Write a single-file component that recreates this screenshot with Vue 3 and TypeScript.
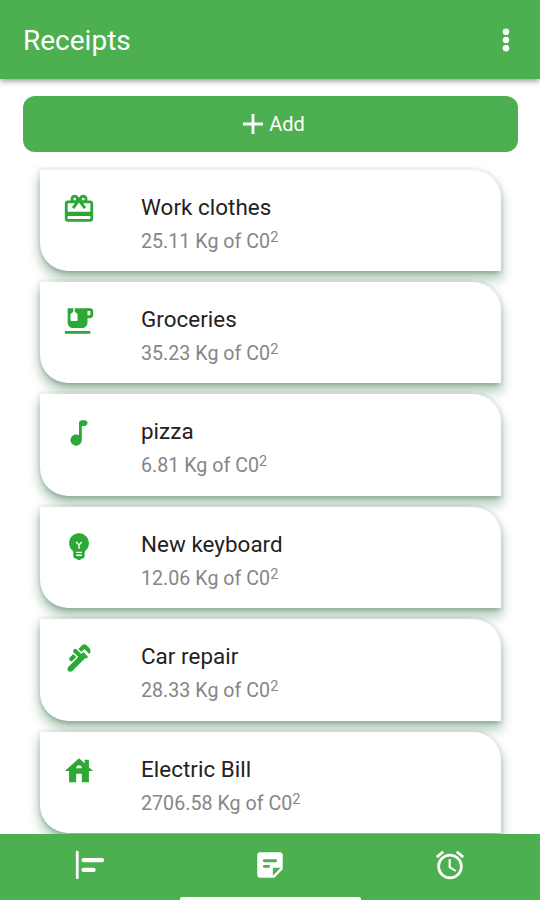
<script setup lang="ts">
interface Receipt {
  title: string
  amount: string
  icon: string
}

const receipts: Receipt[] = [
  {
    title: 'Work clothes',
    amount: '25.11',
    icon: 'M20 6h-2.18c.11-.31.18-.65.18-1 0-1.66-1.34-3-3-3-1.05 0-1.96.54-2.5 1.35l-.5.67-.5-.68C10.96 2.54 10.05 2 9 2 7.34 2 6 3.34 6 5c0 .35.07.69.18 1H4c-1.11 0-1.99.89-1.99 2L2 19c0 1.11.89 2 2 2h16c1.11 0 2-.89 2-2V8c0-1.11-.89-2-2-2zm-5-2c.55 0 1 .45 1 1s-.45 1-1 1-1-.45-1-1 .45-1 1-1zM9 4c.55 0 1 .45 1 1s-.45 1-1 1-1-.45-1-1 .45-1 1-1zm11 15H4v-2h16v2zm0-5H4V8h5.08L7 10.83 8.62 12 11 8.76l1-1.36 1 1.36L15.38 12 17 10.83 14.92 8H20v6z',
  },
  {
    title: 'Groceries',
    amount: '35.23',
    icon: 'M20 3H9v2.4l1.81 1.45c.12.09.19.24.19.38v4.26c0 .28-.22.5-.5.5h-4c-.28 0-.5-.22-.5-.5V7.24c0-.15.07-.3.19-.38L8 5.4V3H4v10c0 2.21 1.79 4 4 4h6c2.21 0 4-1.79 4-4v-3h2c1.11 0 2-.89 2-2V5c0-1.11-.89-2-2-2zm0 5h-2V5h2v3zM2 19h18v2H2v-2z',
  },
  {
    title: 'pizza',
    amount: '6.81',
    icon: 'M12 5v8.55c-.94-.54-2.1-.75-3.33-.32-1.34.48-2.37 1.67-2.61 3.07-.46 2.74 1.86 5.08 4.59 4.65 1.96-.31 3.35-2.11 3.35-4.1V7h2c1.1 0 2-.9 2-2s-.9-2-2-2h-2c-1.1 0-2 .9-2 2z',
  },
  {
    title: 'New keyboard',
    amount: '12.06',
    icon: 'M12 3c-.46 0-.93.04-1.4.14-2.76.53-4.96 2.76-5.48 5.52-.48 2.61.48 5.01 2.22 6.56.43.38.66.91.66 1.47V19c0 1.1.9 2 2 2h.28c.35.6.98 1 1.72 1s1.38-.4 1.72-1H14c1.1 0 2-.9 2-2v-2.31c0-.55.22-1.09.64-1.46C18.09 13.95 19 12.08 19 10c0-3.87-3.13-7-7-7zm2 16h-4v-1h4v1zm0-2h-4v-1h4v1zm-1.5-5.59V14h-1v-2.59L9.67 9.59l.71-.71L12 10.5l1.62-1.62.71.71-1.83 1.82z',
  },
  {
    title: 'Car repair',
    amount: '28.33',
    icon: 'M19.28 4.93l-2.12-2.12c-.78-.78-2.05-.78-2.83 0L11.5 5.64l2.12 2.12 2.12-2.12 3.54 3.54c1.17-1.18 1.17-3.08 0-4.25zM5.49 13.77c.59.59 1.54.59 2.12 0l2.47-2.47-2.12-2.13-2.47 2.47c-.59.59-.59 1.54 0 2.13zM15.04 7.76l-.71.71-.71.71L10.44 6c-.59-.6-1.54-.6-2.12-.01-.59.59-.59 1.54 0 2.12l3.18 3.18-.71.71-6.36 6.36c-.78.78-.78 2.05 0 2.83.78.78 2.05.78 2.83 0L16.45 12c.39.39 1.02.39 1.41 0 .39-.39.39-1.02 0-1.41l-2.82-2.83z',
  },
  {
    title: 'Electric Bill',
    amount: '2706.58',
    icon: 'M19 9.3V4h-3v2.6L12 3 2 12h3v8h5v-6h4v6h5v-8h3l-3-2.7zm-9 .7c0-1.1.9-2 2-2s2 .9 2 2h-4z',
  },
]

const tabs: string[] = [
  'M3 2c.55 0 1 .45 1 1v18c0 .55-.45 1-1 1s-1-.45-1-1V3c0-.55.45-1 1-1zM7.5 7h13c.83 0 1.5.67 1.5 1.5s-.67 1.5-1.5 1.5h-13C6.67 10 6 9.33 6 8.5S6.67 7 7.5 7zM7.5 14h7c.83 0 1.5.67 1.5 1.5s-.67 1.5-1.5 1.5h-7c-.83 0-1.5-.67-1.5-1.5s.67-1.5 1.5-1.5z',
  'M19 3H4.99C3.89 3 3 3.9 3 5l.01 14c0 1.1.89 2 1.99 2h10l6-6V5c0-1.1-.9-2-2-2zM8 8h8c.55 0 1 .45 1 1s-.45 1-1 1H8c-.55 0-1-.45-1-1s.45-1 1-1zm3 6H8c-.55 0-1-.45-1-1s.45-1 1-1h3c.55 0 1 .45 1 1s-.45 1-1 1zm3 5.5V15c0-.55.45-1 1-1h4.5L14 19.5z',
  'M22 5.72l-4.6-3.86-1.29 1.53 4.6 3.86L22 5.72zM7.88 3.39L6.6 1.86 2 5.71l1.29 1.53 4.59-3.85zM12.5 8H11v6l4.75 2.85.75-1.23-4-2.37V8zM12 4c-4.97 0-9 4.03-9 9s4.02 9 9 9c4.97 0 9-4.03 9-9s-4.03-9-9-9zm0 16c-3.87 0-7-3.13-7-7s3.13-7 7-7 7 3.13 7 7-3.13 7-7 7z',
]
</script>

<template>
  <div class="screen">
    <header class="app-bar">
      <h1>Receipts</h1>
      <svg class="icon more" viewBox="0 0 24 24">
        <circle cx="12" cy="6.2" r="2.3" />
        <circle cx="12" cy="12" r="2.3" />
        <circle cx="12" cy="17.8" r="2.3" />
      </svg>
    </header>

    <main class="content">
      <button class="add" type="button">
        <svg class="plus" viewBox="0 0 20 20"><path d="M8.6 0h2.8v8.6H20v2.8h-8.6V20H8.6v-8.6H0V8.6h8.6z" /></svg>
        <span>Add</span>
      </button>

      <ul class="list">
        <li v-for="r in receipts" :key="r.title" class="card">
          <svg class="icon" viewBox="0 0 24 24"><path :d="r.icon" /></svg>
          <div class="text">
            <div class="title">{{ r.title }}</div>
            <div class="amount">{{ r.amount }} Kg of C0<sup>2</sup></div>
          </div>
        </li>
      </ul>
    </main>

    <nav class="tabs">
      <button v-for="(d, i) in tabs" :key="i" type="button" class="tab">
        <svg class="icon" viewBox="0 0 24 24"><path :d="d" /></svg>
      </button>
      <div class="indicator"></div>
    </nav>
  </div>
</template>

<style>
body {
  margin: 0;
  background: #fff;
}
</style>

<style scoped>
.screen {
  width: 540px;
  height: 900px;
  overflow: hidden;
  display: flex;
  flex-direction: column;
  background: #fff;
  font-family: Roboto, "Liberation Sans", sans-serif;
}

.icon {
  display: block;
  flex: none;
  width: 34px;
  height: 34px;
  fill: currentColor;
}

.app-bar {
  position: relative;
  z-index: 1;
  flex: none;
  box-sizing: border-box;
  height: 79px;
  padding: 2px 17px 0 23px;
  display: flex;
  align-items: center;
  justify-content: space-between;
  background: #4caf50;
  color: #fff;
  box-shadow: 0 2px 6px rgba(0, 0, 0, 0.42);
}

.more {
  margin-bottom: 1.5px;
}

h1 {
  margin: 0;
  font-size: 28px;
  line-height: 34px;
  font-weight: 400;
}

.content {
  flex: 1;
  min-height: 0;
  overflow: hidden;
  padding: 17px 22.5px 0 23px;
}

.add {
  display: flex;
  align-items: center;
  justify-content: center;
  gap: 6.5px;
  width: 100%;
  height: 56px;
  padding: 0 0 0 7px;
  border: 0;
  border-radius: 12px;
  background: #4caf50;
  color: #fff;
  font: 400 20px/24px Roboto, "Liberation Sans", sans-serif;
}

.plus {
  width: 20px;
  height: 20px;
  fill: currentColor;
}

.list {
  list-style: none;
  margin: 0;
  padding: 17.5px 17px 0 16.5px;
  display: flex;
  flex-direction: column;
  gap: 11.2px;
}

.card {
  position: relative;
  box-sizing: border-box;
  height: 101.3px;
  flex: none;
  display: flex;
  padding: 22px 23px 0 22.5px;
  gap: 45px;
  background: #fff;
  border-radius: 0 28px 0 28px;
  color: #2ca835;
  box-shadow:
    0 0 1px 3px rgba(0, 0, 0, 0.03),
    0 4px 4px -2px rgba(20, 75, 35, 0.22),
    0 8px 11px 1px rgba(20, 100, 45, 0.24),
    0 5px 13px 1px rgba(20, 100, 45, 0.12);
}

.title {
  margin-top: 1px;
  font-size: 22.4px;
  line-height: 28px;
  letter-spacing: 0.04px;
  color: #222;
}

.amount {
  margin-top: 8px;
  font-size: 19.6px;
  line-height: 26px;
  letter-spacing: 0.04px;
  color: #868686;
}

.amount sup {
  font-size: 14.5px;
  line-height: 0;
  vertical-align: 6px;
}

.tabs {
  position: relative;
  flex: none;
  height: 66.5px;
  display: grid;
  grid-template-columns: repeat(3, 1fr);
  background: #4caf50;
  color: #fff;
}

.tab {
  display: flex;
  justify-content: center;
  padding: 14.5px 0 0;
  border: 0;
  background: none;
  color: inherit;
}

.indicator {
  position: absolute;
  left: 180px;
  bottom: 0;
  width: 181px;
  height: 3px;
  border-radius: 2px 2px 0 0;
  background: #fff;
}
</style>
